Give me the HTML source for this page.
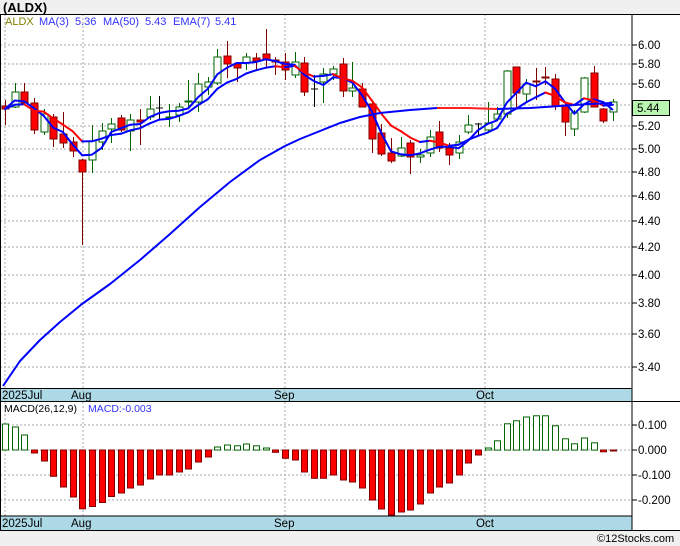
<!DOCTYPE html>
<html><head><meta charset="utf-8">
<style>
body{margin:0;width:680px;height:546px;background:#f0f0f0;overflow:hidden;font-family:"Liberation Sans",sans-serif;}
svg{position:absolute;left:0;top:0}
</style></head><body>
<svg id="s" width="680" height="546" xmlns="http://www.w3.org/2000/svg" font-family="Liberation Sans, sans-serif">
<rect x="0" y="14" width="680" height="517" fill="#fff"/>
<text x="3" y="12" font-size="13" font-weight="bold" fill="#000">(ALDX)</text>
<rect x="0" y="388" width="632" height="14" fill="#add8e6"/>
<rect x="0" y="516" width="632" height="14" fill="#add8e6"/>
<g id="g"></g>
<line x1="0" y1="14.5" x2="680" y2="14.5" stroke="#000"/>
<line x1="0" y1="388.5" x2="632" y2="388.5" stroke="#000"/>
<line x1="0" y1="401.5" x2="680" y2="401.5" stroke="#000"/>
<line x1="0" y1="516" x2="632" y2="516" stroke="#000"/>
<line x1="0" y1="530.5" x2="680" y2="530.5" stroke="#000"/>
<line x1="0.5" y1="14" x2="0.5" y2="530" stroke="#000"/>
<line x1="632" y1="14" x2="632" y2="530" stroke="#000"/>
<g font-size="11">
<text x="5" y="25" fill="#808000">ALDX</text>
<text x="39" y="25" fill="#3333ff">MA(3)</text>
<text x="75" y="25" fill="#3333ff">5.36</text>
<text x="103" y="25" fill="#3333ff">MA(50)</text>
<text x="145" y="25" fill="#3333ff">5.43</text>
<text x="173" y="25" fill="#3333ff">EMA(7)</text>
<text x="215" y="25" fill="#3333ff">5.41</text>
</g>
<text x="4" y="412" font-size="10.5" fill="#000">MACD(26,12,9)</text>
<text x="88" y="412" font-size="10.5" fill="#3333ff">MACD:-0.003</text>
<g font-size="11.5" fill="#000">
<text x="2" y="399">2025Jul</text><text x="71" y="399">Aug</text><text x="274" y="399">Sep</text><text x="476" y="399">Oct</text>
<text x="2" y="527">2025Jul</text><text x="71" y="527">Aug</text><text x="274" y="527">Sep</text><text x="476" y="527">Oct</text>
</g>
<rect x="632.5" y="100.5" width="37" height="15" fill="#b8f5b0" stroke="#000"/>
<text x="637" y="112" font-size="11.5" fill="#000">5.44</text>
<text x="597" y="542" font-size="11" fill="#000">©12Stocks.com</text>
</svg>
<script>
var g=document.getElementById('g'),h='';
function X(i){return 5+i*9.65}
var lv=[[6.00,45],[5.80,64],[5.60,84],[5.40,105],[5.20,126],[5.00,149],[4.80,172],[4.60,196],[4.40,221],[4.20,247],[4.00,275],[3.80,303],[3.60,334],[3.40,367]];
lv.forEach(function(l){h+='<line x1="0" y1="'+l[1]+'" x2="632" y2="'+l[1]+'" stroke="#aaa" stroke-dasharray="2,2"/>';
h+='<line x1="632" y1="'+l[1]+'" x2="637" y2="'+l[1]+'" stroke="#000"/>';
if(l[0]!=5.40)h+='<text x="638" y="'+(l[1]+4)+'" font-size="11.5" fill="#000">'+l[0].toFixed(2)+'</text>';});
[5,83,285,485].forEach(function(x){h+='<line x1="'+x+'" y1="14" x2="'+x+'" y2="530" stroke="#aaa" stroke-dasharray="2,2"/>'});
[[0.1,425],[0,450],[-0.1,475],[-0.2,500]].forEach(function(l){h+='<line x1="0" y1="'+l[1]+'" x2="632" y2="'+l[1]+'" stroke="#aaa" stroke-dasharray="2,2"/><line x1="632" y1="'+l[1]+'" x2="637" y2="'+l[1]+'" stroke="#000"/><text x="638" y="'+(l[1]+4)+'" font-size="11.5" fill="#000">'+l[0].toFixed(3)+'</text>'});
var c=[['r',106,109,100,125],['g',92,107,83,108],['r',92,103,83,103],['r',103,130,98,134],['g',114,132,109,135],['r',117,139,114,147],['r',134,143,112,148],['r',142,151,137,157],['r',160,172,159,245],['g',141,160,125,173],['g',131,142,123,150],['g',124,129,118,143],['r',118,130,115,132],['g',120,131,114,151],['r',120,122,109,145],['g',109,117,96,120],['k',108,108,96,119],['g',117,118,104,127],['g',107,115,103,122],['g',101,102,80,108],['g',84,102,73,112],['g',82,87,77,95],['g',57,83,49,85],['r',56,64,41,78],['r',64,68,62,82],['g',57,63,53,70],['r',58,61,53,70],['r',54,60,29,67],['r',60,62,57,75],['r',62,70,53,80],['g',62,75,52,78],['r',63,92,57,96],['k',89,89,75,107],['g',74,82,68,103],['g',69,74,66,80],
['r',64,91,58,97],['g',88,91,62,97],['r',89,107,83,107],['r',104,139,100,153],['r',133,154,124,156],['r',153,161,138,163],['g',148,156,137,157],['r',143,157,140,174],['g',155,157,149,163],['g',137,153,130,157],['r',132,148,121,152],['r',148,155,143,165],['g',142,153,135,159],['g',125,132,115,134],['k',124,124,123,135],['g',123,130,102,133],['g',114,119,107,121],['g',71,114,70,118],['r',67,93,67,108],['g',84,94,79,102],['r',81,82,68,100],['r',77,78,67,85],['r',79,106,74,110],['r',105,122,103,136],['g',113,129,110,136],['g',78,112,77,113],['r',73,107,66,107],['r',109,121,108,123],['g',102,112,99,121]];
var cl=[];
c.forEach(function(d,i){var x=Math.round(X(i));var col=d[0]=='r'?'#800000':d[0]=='g'?'#006400':'#000';
h+='<line x1="'+(x+.5)+'" y1="'+d[3]+'" x2="'+(x+.5)+'" y2="'+d[4]+'" stroke="'+col+'"/>';
var bh=Math.max(d[2]-d[1],1);
if(d[0]=='r')h+='<rect x="'+(x-3)+'" y="'+d[1]+'" width="7" height="'+bh+'" fill="#f00" stroke="#800000"/>';
else if(d[0]=='g')h+='<rect x="'+(x-3)+'" y="'+d[1]+'" width="7" height="'+bh+'" fill="#fff" stroke="#006400"/>';
else h+='<line x1="'+(x-3)+'" y1="'+d[1]+'" x2="'+(x+4)+'" y2="'+d[1]+'" stroke="#000"/>';
cl.push(d[0]=='r'?d[2]:d[1]);});
var ma=[],em=[];
for(var i=0;i<cl.length;i++){var s=0,n=0;for(var j=Math.max(0,i-2);j<=i;j++){s+=cl[j];n++}ma.push(s/n);}
var e=cl[0];var k=2/8;for(i=0;i<cl.length;i++){e=i?cl[i]*k+e*(1-k):cl[0];em.push(e);}
var p='';ma.forEach(function(v,i){p+=(i?'L':'M')+X(i).toFixed(1)+','+v.toFixed(1)});
h+='<path d="'+p+'" fill="none" stroke="#0000ff" stroke-width="2"/>';
for(i=1;i<em.length;i++){var col=em[i]>em[i-1]?'#ff0000':'#0000ff';
h+='<line x1="'+X(i-1)+'" y1="'+em[i-1].toFixed(1)+'" x2="'+X(i)+'" y2="'+em[i].toFixed(1)+'" stroke="'+col+'" stroke-width="2" stroke-linecap="round"/>';}
// MA50 smooth
var m=[[3,386],[20,361],[40,340],[60,322],[82,304],[110,284],[140,260],[170,234],[200,207],[230,182],[260,160],[285,146],[300,139],[320,131],[340,123],[360,117],[380,113],[410,110],[437,108],[467,108],[497,109],[530,108],[560,106],[590,104],[612,103]];
function seg(a,b,col){var d='M'+m[a][0]+','+m[a][1];for(var t=a+1;t<=b;t++)d+='L'+m[t][0]+','+m[t][1];h+='<path d="'+d+'" fill="none" stroke="'+col+'" stroke-width="2" stroke-linejoin="round"/>';}
seg(0,18,'#0000ff');seg(18,20,'#ff2020');seg(20,24,'#0000ff');
var mv=[.104,.092,.06,-.012,-.044,-.105,-.148,-.188,-.235,-.226,-.21,-.186,-.172,-.152,-.14,-.116,-.1,-.1,-.088,-.076,-.048,-.028,.012,.02,.017,.024,.017,.008,-.009,-.033,-.04,-.088,-.113,-.113,-.1,-.12,-.128,-.152,-.2,-.236,-.26,-.248,-.24,-.216,-.172,-.148,-.132,-.1,-.052,-.02,.008,.037,.105,.117,.132,.137,.137,.097,.045,.025,.048,.029,-.007,-.004];
mv.forEach(function(v,i){var x=Math.round(X(i))-3;var y=450-v*250;
if(v>=0)h+='<rect x="'+(x+.5)+'" y="'+y.toFixed(1)+'" width="6" height="'+(450-y).toFixed(1)+'" fill="#fff" stroke="#006400"/>';
else{var yb=Math.min(y,515);h+='<rect x="'+(x+.5)+'" y="450" width="6" height="'+(yb-450).toFixed(1)+'" fill="#f00" stroke="#800000"/>';}});
g.innerHTML=h;
</script>
</body></html>
